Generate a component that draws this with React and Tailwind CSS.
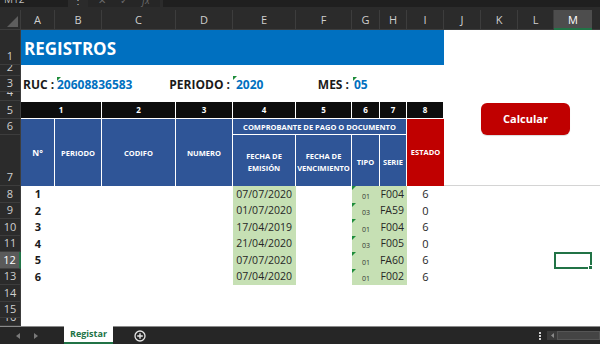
import React from "react";

const font = "font-['Open_Sans','Liberation_Sans',sans-serif]";

const cols = [
  ["A", "w-[34px]"],
  ["B", "w-[47px]"],
  ["C", "w-[74px]"],
  ["D", "w-[57px]"],
  ["E", "w-[63px]"],
  ["F", "w-[56px]"],
  ["G", "w-[28px]"],
  ["H", "w-[27px]"],
  ["I", "w-[37px]"],
  ["J", "w-[37px]"],
  ["K", "w-[37px]"],
  ["L", "w-[36px]"],
  ["M", "w-[38px]"],
];

const data = [
  { n: 1, h: "h-[17px]", fecha: "07/07/2020", tipo: "01", serie: "F004", estado: 6 },
  { n: 2, h: "h-[16px]", fecha: "01/07/2020", tipo: "03", serie: "FA59", estado: 0 },
  { n: 3, h: "h-[17px]", fecha: "17/04/2019", tipo: "01", serie: "F004", estado: 6 },
  { n: 4, h: "h-[16px]", fecha: "21/04/2020", tipo: "03", serie: "F005", estado: 0 },
  { n: 5, h: "h-[17px]", fecha: "07/07/2020", tipo: "01", serie: "FA60", estado: 6, active: true },
  { n: 6, h: "h-[16px]", fecha: "07/04/2020", tipo: "01", serie: "F002", estado: 6 },
];

// little green "number stored as text" marker
function Mark() {
  return (
    <span className="absolute left-0 top-0 w-0 h-0 border-t-[4px] border-r-[4px] border-t-[#1e8c3a] border-r-transparent" />
  );
}

function RowHead({ label, active, h }) {
  return (
    <div
      className={`w-[21px] shrink-0 ${h || "h-full"} flex items-end justify-center pb-[2px] overflow-hidden text-[11px] leading-[13px] border-b ${
        active
          ? "bg-[#5a5a5a] text-white border-b-[#404040] border-r-2 border-r-[#217346]"
          : "bg-[#2b2b2b] text-[#cfcfcf] border-b-[#3d3d3d] border-r border-r-[#3d3d3d]"
      }`}
    >
      {label}
    </div>
  );
}

function Row({ h, label, active, children }) {
  return (
    <div className={`flex shrink-0 ${h}`}>
      <RowHead label={label} active={active} />
      {children}
    </div>
  );
}

function TopBar() {
  return (
    <div className="h-[10px] shrink-0 bg-[#2b2b2b] flex items-start text-[#bdbdbd]">
      <div className="w-[68px] h-[7px] bg-[#1f1f1f] overflow-hidden pl-[4px]">
        <div className="-mt-[7px] text-[10px] leading-[12px]">M12</div>
      </div>
      <div className="w-[20px] h-[7px] flex justify-center overflow-hidden">
        <div className="-mt-[6px] text-[10px] leading-[12px]">⋮</div>
      </div>
      <div className="w-[72px] h-[7px] bg-[#262626] overflow-hidden flex gap-[14px] pl-[10px] text-[#6a6a6a]">
        <div className="-mt-[6px] text-[10px] leading-[12px]">✕</div>
        <div className="-mt-[6px] text-[10px] leading-[12px]">✓</div>
        <div className="-mt-[6px] text-[10px] leading-[12px] italic">fx</div>
      </div>
      <div className="ml-[3px] flex-1 h-[7px] bg-[#1f1f1f]" />
    </div>
  );
}

function ColumnHeaders() {
  return (
    <div className="h-[20px] shrink-0 flex bg-[#2b2b2b] text-[#cfcfcf] text-[11px]">
      <div className="w-[21px] shrink-0 border-r border-b border-[#3d3d3d] flex items-end justify-end pr-[2px] pb-[2px]">
        <svg width="11" height="11" viewBox="0 0 11 11">
          <polygon points="11,0 11,11 0,11" fill="#5e5e5e" />
        </svg>
      </div>
      {cols.map(([l, w]) => (
        <div
          key={l}
          className={`${w} shrink-0 flex items-center justify-center pt-[2px] ${
            l === "M"
              ? "bg-[#4d4d4d] text-white border-b-2 border-[#217346]"
              : "border-r border-b border-[#3d3d3d]"
          }`}
        >
          {l}
        </div>
      ))}
      <div className="flex-1 border-b border-[#3d3d3d]" />
    </div>
  );
}

function BottomBar() {
  return (
    <div className="h-[18px] shrink-0 bg-[#262626] border-t border-[#8a8a8a] flex items-stretch">
      <div className="w-[64px] flex items-center pl-[16px] gap-[14px]">
        <svg width="4" height="6" viewBox="0 0 4 6">
          <polygon points="4,0 4,6 0,3" fill="#7a7a7a" />
        </svg>
        <svg width="4" height="6" viewBox="0 0 4 6">
          <polygon points="0,0 0,6 4,3" fill="#7a7a7a" />
        </svg>
      </div>
      <div className="w-[49px] -mt-[1px] bg-white border-b-2 border-[#217346] flex items-center justify-center text-[#217346] font-bold text-[9px]">
        Registar
      </div>
      <div className="ml-[21px] flex items-center">
        <svg width="12" height="12" viewBox="0 0 12 12">
          <circle cx="6" cy="6" r="5" fill="none" stroke="#e6e6e6" strokeWidth="1.3" />
          <path d="M6 3.2v5.6M3.2 6h5.6" stroke="#e6e6e6" strokeWidth="1.4" />
        </svg>
      </div>
      <div className="flex-1" />
      <div className="w-[10px] flex flex-col items-center justify-center gap-[1px] mr-[2px]">
        <span className="w-[2px] h-[2px] bg-[#cfcfcf]" />
        <span className="w-[2px] h-[2px] bg-[#cfcfcf]" />
        <span className="w-[2px] h-[2px] bg-[#cfcfcf]" />
      </div>
      <div className="w-[53px] flex items-center">
        <div className="h-[9px] w-[10px] bg-[#3a3a3a] flex items-center justify-center">
          <svg width="3" height="5" viewBox="0 0 3 5">
            <polygon points="3,0 3,5 0,2.5" fill="#8a8a8a" />
          </svg>
        </div>
        <div className="h-[9px] flex-1 bg-[#444444] border border-[#555555]" />
      </div>
    </div>
  );
}

export default function App() {
  const blue = "bg-[#2f5597] text-white font-bold text-[7.5px] leading-[12px] flex items-center justify-center text-center border-r border-white";
  const black = "bg-[#0d0d0d] text-white font-bold text-[8px] flex items-center justify-center border-r border-white";

  return (
    <div className={`relative w-[600px] h-[344px] overflow-hidden bg-white flex flex-col text-[#1a1a1a] ${font}`}>
      <TopBar />
      <ColumnHeaders />

      {/* title */}
      <Row h="h-[35px]" label="1">
        <div className="w-[423px] bg-[#0070c0] flex items-center pl-[3px] pt-[2px]">
          <span className="text-white font-bold text-[17px]">REGISTROS</span>
        </div>
      </Row>
      <Row h="h-[11px]" label="2" />

      {/* ruc / periodo / mes */}
      <Row h="h-[16px]" label="3">
        <div className="w-[34px] flex items-end pl-[2px] font-bold text-[12px] leading-[15px] whitespace-nowrap">RUC :</div>
        <div className="w-[121px] relative flex items-end pl-[2px] font-bold text-[12px] leading-[15px] text-[#0070c0]">
          <span className="absolute left-[2px] top-[1px] w-0 h-0 border-t-[4px] border-r-[4px] border-t-[#1e8c3a] border-r-transparent" />
          20608836583
        </div>
        <div className="w-[57px] flex items-end justify-end pr-[3px] font-bold text-[12px] leading-[15px] whitespace-nowrap">PERIODO :</div>
        <div className="w-[63px] relative flex items-end pl-[3px] font-bold text-[12px] leading-[15px] text-[#0070c0]">
          <Mark />
          2020
        </div>
        <div className="w-[56px] flex items-end justify-end pr-[3px] font-bold text-[12px] leading-[15px] whitespace-nowrap">MES :</div>
        <div className="w-[28px] relative flex items-end pl-[2px] font-bold text-[12px] leading-[15px] text-[#0070c0]">
          <span className="absolute left-[1px] top-[1px] w-0 h-0 border-t-[4px] border-r-[4px] border-t-[#1e8c3a] border-r-transparent" />
          05
        </div>
      </Row>
      <Row h="h-[9px]" label="4" />

      {/* numbered black bar */}
      <Row h="h-[18px]" label="5">
        <div className="flex py-[1px]">
          <div className={`w-[81px] ${black}`}>1</div>
          <div className={`w-[74px] ${black}`}>2</div>
          <div className={`w-[57px] ${black}`}>3</div>
          <div className={`w-[63px] ${black}`}>4</div>
          <div className={`w-[56px] ${black}`}>5</div>
          <div className={`w-[28px] ${black}`}>6</div>
          <div className={`w-[27px] ${black}`}>7</div>
          <div className={`w-[37px] ${black}`}>8</div>
        </div>
      </Row>

      {/* table header, rows 6-7 */}
      <div className="flex h-[67px] shrink-0">
        <div className="flex flex-col">
          <RowHead label="6" h="h-[16px]" />
          <RowHead label="7" h="h-[51px]" />
        </div>
        <div className={`w-[34px] ${blue} text-[8.5px]`}>N°</div>
        <div className={`w-[47px] ${blue}`}>PERIODO</div>
        <div className={`w-[74px] ${blue}`}>CODIFO</div>
        <div className={`w-[57px] ${blue}`}>NUMERO</div>
        <div className="w-[174px] flex flex-col">
          <div className={`h-[16px] ${blue} border-b`}>COMPROBANTE DE PAGO O DOCUMENTO</div>
          <div className="flex flex-1">
            <div className={`w-[63px] pt-[3px] ${blue}`}>FECHA DE<br />EMISIÓN</div>
            <div className={`w-[56px] pt-[3px] ${blue}`}>FECHA DE<br />VENCIMIENTO</div>
            <div className={`w-[28px] pt-[3px] ${blue}`}>TIPO</div>
            <div className={`w-[27px] pt-[3px] ${blue}`}>SERIE</div>
          </div>
        </div>
        <div className="w-[37px] bg-[#c00000] text-white font-bold text-[7.5px] flex items-center justify-center">ESTADO</div>
        <div className="flex-1 border-b border-[#d4d4d4]" />
      </div>

      {/* data */}
      {data.map((r) => (
        <Row key={r.n} h={r.h} label={String(7 + r.n)} active={r.active}>
          <div className="w-[34px] flex items-center justify-center font-bold text-[11px]">{r.n}</div>
          <div className="w-[47px]" />
          <div className="w-[74px]" />
          <div className="w-[57px]" />
          <div className="w-[63px] bg-[#c6e0b4] flex items-center justify-end pr-[4px] text-[10.5px] text-[#262626]">
            {r.fecha}
          </div>
          <div className="w-[56px]" />
          <div className="w-[28px] bg-[#c6e0b4] relative flex items-end justify-center pb-[2px] text-[7px] leading-[9px] text-[#333]">
            <Mark />
            {r.tipo}
          </div>
          <div className="w-[27px] bg-[#c6e0b4] flex items-center justify-end pr-[3px] text-[10.5px] text-[#262626]">
            {r.serie}
          </div>
          <div className="w-[37px] flex items-center justify-center text-[11px] text-[#262626]">{r.estado}</div>
          <div className="w-[37px]" />
          <div className="w-[37px]" />
          <div className="w-[36px]" />
          {r.active ? (
            <div className="w-[38px] relative border-2 border-[#217346]">
              <span className="absolute -right-[3px] -bottom-[3px] w-[5px] h-[5px] bg-[#217346] border border-white" />
            </div>
          ) : (
            <div className="w-[38px]" />
          )}
        </Row>
      ))}
      <Row h="h-[17px]" label="14" />
      <Row h="h-[16px]" label="15" />
      <Row h="h-[8px]" label="16" />

      <BottomBar />

      {/* floating macro button */}
      <button className="absolute left-[481px] top-[103px] w-[89px] h-[32px] rounded-[6px] bg-[#c00000] text-white font-bold text-[11px] shadow-[0_1px_1px_rgba(0,0,0,0.15)]">
        Calcular
      </button>
    </div>
  );
}
